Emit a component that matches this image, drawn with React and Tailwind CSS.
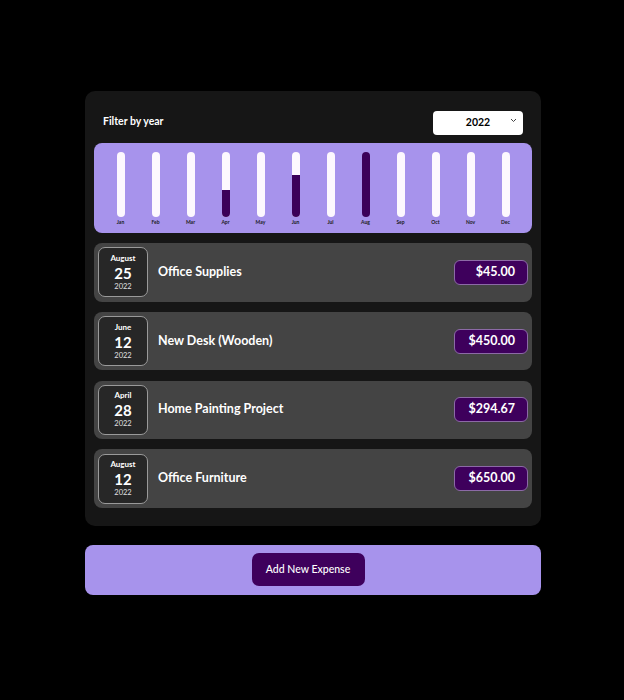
import { useState } from "react";

const expenses = [
  { id: "e1", title: "Office Supplies", amount: 45, date: new Date(2022, 7, 25) },
  { id: "e2", title: "New Desk (Wooden)", amount: 450, date: new Date(2022, 5, 12) },
  { id: "e3", title: "Home Painting Project", amount: 294.67, date: new Date(2022, 3, 28) },
  { id: "e4", title: "Office Furniture", amount: 650, date: new Date(2022, 7, 12) },
];

const months = ["Jan", "Feb", "Mar", "Apr", "May", "Jun", "Jul", "Aug", "Sep", "Oct", "Nov", "Dec"];

function ChartBar({ label, value, max }) {
  const pct = max > 0 ? Math.round((value / max) * 100) + "%" : "0%";
  return (
    <div className="flex w-[35px] flex-col items-center">
      <div className="flex h-[65px] w-[8px] flex-col justify-end overflow-hidden rounded-full bg-[#fdf8fe]">
        <div className="w-full bg-[#3b0059]" style={{ height: pct }} />
      </div>
      <div className="mt-[3px] text-[5px] font-bold leading-none text-[#1a1a1a]">{label}</div>
    </div>
  );
}

function ExpenseDate({ date }) {
  const month = date.toLocaleString("en-US", { month: "long" });
  const day = date.toLocaleString("en-US", { day: "2-digit" });
  const year = date.getFullYear();
  return (
    <div className="flex h-[50px] w-[50px] shrink-0 flex-col items-center justify-center rounded-[7px] border border-[#9a9a9a] bg-[#272727] text-white">
      <div className="text-[8px] font-bold leading-[11px]">{month}</div>
      <div className="text-[15px] font-bold leading-[18px]">{day}</div>
      <div className="text-[7.5px] leading-[10px] text-[#e0e0e0]">{year}</div>
    </div>
  );
}

function ExpenseItem({ item }) {
  return (
    <li className="flex h-[58.5px] items-center rounded-[8px] bg-[#444444] p-[4px]">
      <ExpenseDate date={item.date} />
      <h2 className="ml-[10px] flex-1 text-[12.5px] font-bold text-white">{item.title}</h2>
      <div className="flex h-[25px] w-[74px] items-center justify-end rounded-[6px] border border-[#8c6aa6] bg-[#3e005c] pr-[12px] text-[12.5px] font-bold text-white">
        ${item.amount.toFixed(2)}
      </div>
    </li>
  );
}

export default function App() {
  const [year, setYear] = useState("2022");
  const filtered = expenses.filter((e) => e.date.getFullYear().toString() === year);

  const values = months.map((_, i) =>
    filtered.filter((e) => e.date.getMonth() === i).reduce((s, e) => s + e.amount, 0)
  );
  const max = Math.max(...values);

  return (
    <div className="min-h-[700px] bg-black pt-[91px] font-['Lato',sans-serif]">
      <div className="mx-auto w-[456px] translate-x-[1px]">
        <div className="rounded-[10px] bg-[#161616] px-[9px] pt-[9px] pb-[18px]">
          <div className="flex h-[43px] items-center justify-between px-[9px]">
            <label className="text-[10.5px] font-bold text-white">Filter by year</label>
            <div className="relative">
              <select
                value={year}
                onChange={(e) => setYear(e.target.value)}
                className="h-[24px] w-[90px] appearance-none rounded-[4px] bg-white text-center text-[10.5px] font-bold text-black outline-none"
              >
                <option value="2022">2022</option>
                <option value="2021">2021</option>
                <option value="2020">2020</option>
                <option value="2019">2019</option>
              </select>
              <svg
                className="pointer-events-none absolute right-[6px] top-[10px]"
                width="7"
                height="5"
                viewBox="0 0 7 5"
                fill="none"
                stroke="#444"
                strokeWidth="1"
              >
                <path d="M1 1l2.5 2.5L6 1" />
              </svg>
            </div>
          </div>

          <div className="flex h-[90px] justify-center rounded-[8px] bg-[#a793ec] pt-[9px]">
            {months.map((m, i) => (
              <ChartBar key={m} label={m} value={values[i]} max={max} />
            ))}
          </div>

          <ul className="mt-[10px] flex flex-col gap-[10.3px]">
            {filtered.map((item) => (
              <ExpenseItem key={item.id} item={item} />
            ))}
          </ul>
        </div>

        <div className="mt-[19px] flex h-[50px] items-center justify-center rounded-[8px] bg-[#a793ec] pr-[10px]">
          <button className="h-[33px] w-[113px] rounded-[7px] bg-[#3e005c] text-[10.5px] font-medium text-white">
            Add New Expense
          </button>
        </div>
      </div>
    </div>
  );
}
